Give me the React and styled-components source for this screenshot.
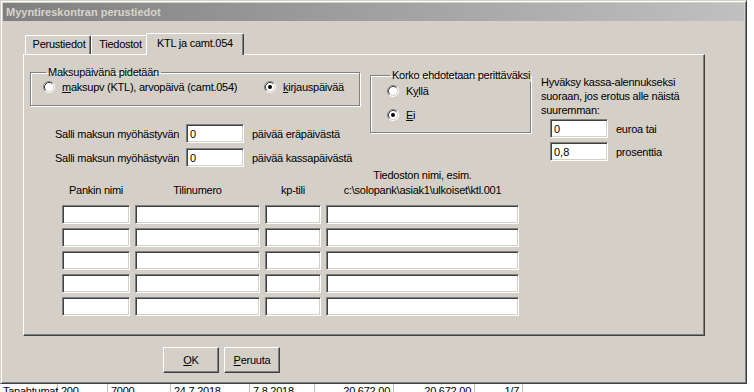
import React from 'react'
import styled, { createGlobalStyle } from 'styled-components'

const GlobalStyle = createGlobalStyle`
  body {
    margin: 0;
    background: #fff;
    font-family: "Liberation Sans", Arial, sans-serif;
    font-size: 11px;
    letter-spacing: -0.25px;
    color: #000;
  }
`

const bankRows = [0, 1, 2, 3, 4]

const Radio = ({ checked }) => (
  <svg width="12" height="12" viewBox="0 0 12 12">
    <circle cx="6" cy="6" r="5" fill="#fff" />
    <path d="M2.11 9.89 A5.5 5.5 0 0 1 9.89 2.11" stroke="#808080" fill="none" />
    <path d="M9.89 2.11 A5.5 5.5 0 0 1 2.11 9.89" stroke="#fff" fill="none" />
    <path d="M2.82 9.18 A4.5 4.5 0 0 1 9.18 2.82" stroke="#404040" fill="none" />
    <path d="M9.18 2.82 A4.5 4.5 0 0 1 2.82 9.18" stroke="#d4d0c8" fill="none" />
    {checked && <circle cx="6" cy="6" r="2" fill="#000" />}
  </svg>
)

const App = () => {
  return (
    <>
      <GlobalStyle />
      <Window>
        <TitleBar>Myyntireskontran perustiedot</TitleBar>
        <Body>
          <TabRow>
            <Tab w={66}>Perustiedot</Tab>
            <Tab w={57}>Tiedostot</Tab>
            <Tab w={98} active>KTL ja camt.054</Tab>
          </TabRow>
          <Panel>
            <TopSection>
              <LeftCol>
                <GroupBox>
                  <Legend>Maksupäivänä pidetään</Legend>
                  <RadioRow>
                    <Option w={221}><Radio /><span><u>m</u>aksupv (KTL), arvopäivä (camt.054)</span></Option>
                    <Option><Radio checked /><span><u>k</u>irjauspäivää</span></Option>
                  </RadioRow>
                </GroupBox>
                <DelayRows>
                  <FieldRow>
                    <Label w={131}>Salli maksun myöhästyvän</Label>
                    <Input w={58} defaultValue="0" />
                    <After>päivää eräpäivästä</After>
                  </FieldRow>
                  <FieldRow>
                    <Label w={131}>Salli maksun myöhästyvän</Label>
                    <Input w={58} defaultValue="0" />
                    <After>päivää kassapäivästä</After>
                  </FieldRow>
                </DelayRows>
              </LeftCol>
              <GroupBox2>
                <Legend>Korko ehdotetaan perittäväksi</Legend>
                <RadioCol>
                  <Option><Radio /><span>K<u>y</u>llä</span></Option>
                  <Option><Radio checked /><span><u>E</u>i</span></Option>
                </RadioCol>
              </GroupBox2>
              <RightCol>
                <Note>Hyväksy kassa-alennukseksi<br />suoraan, jos erotus alle näistä<br />suuremman:</Note>
                <SmallRows>
                  <FieldRow>
                    <Input w={58} defaultValue="0" />
                    <After>euroa tai</After>
                  </FieldRow>
                  <FieldRow>
                    <Input w={58} defaultValue="0,8" />
                    <After>prosenttia</After>
                  </FieldRow>
                </SmallRows>
              </RightCol>
            </TopSection>
            <BankGrid>
              <Head>Pankin nimi</Head>
              <Head>Tilinumero</Head>
              <Head>kp-tili</Head>
              <Head>Tiedoston nimi, esim.<br />c:\solopank\asiak1\ulkoiset\ktl.001</Head>
              {bankRows.map(r => (
                <React.Fragment key={r}>
                  <Input />
                  <Input />
                  <Input />
                  <Input />
                </React.Fragment>
              ))}
            </BankGrid>
          </Panel>
          <ButtonRow>
            <Button><u>O</u>K</Button>
            <Button><u>P</u>eruuta</Button>
          </ButtonRow>
        </Body>
      </Window>
      <Strip>
        <Cell w={58}>Tapahtumat</Cell>
        <Cell w={50}>200</Cell>
        <Cell w={63}>7000</Cell>
        <Cell w={79}>24.7.2018</Cell>
        <Cell w={65}>7.8.2018</Cell>
        <Cell w={79} right>20 672,00</Cell>
        <Cell w={81} right>20 672,00</Cell>
        <Cell w={48} right>1/7</Cell>
      </Strip>
    </>
  )
}

const Window = styled.div`
  width: 747px;
  height: 384px;
  box-sizing: border-box;
  background: #d4d0c8;
  border: 1px solid;
  border-color: #d4d0c8 #404040 #404040 #d4d0c8;
  box-shadow: inset 1px 1px #fff, inset -1px -1px #808080;
  padding: 2px;
  display: flex;
  flex-direction: column;
`

const TitleBar = styled.div`
  height: 18px;
  line-height: 18px;
  padding-left: 3px;
  background: linear-gradient(to right, #808080, #c0c0c0);
  color: #d8d4cc;
  font-weight: bold;
  font-size: 11px;
  letter-spacing: 0;
`

const Body = styled.div`
  padding: 12px 0 0 20px;
`

const TabRow = styled.div`
  display: flex;
  align-items: flex-end;
  height: 21px;
  padding-left: 2px;
  position: relative;
  z-index: 1;
`

const Tab = styled.div`
  box-sizing: border-box;
  width: ${p => p.w}px;
  height: ${p => (p.active ? 22 : 19)}px;
  margin: ${p => (p.active ? '0 0 -1px -2px' : '0')};
  border-top: 1px solid #fff;
  border-left: 1px solid #fff;
  border-right: 1px solid #404040;
  box-shadow: inset -1px 0 #808080;
  border-radius: 2px 2px 0 0;
  background: #d4d0c8;
  text-align: center;
  line-height: ${p => (p.active ? 18 : 17)}px;
  padding-left: ${p => (p.active ? 0 : 2)}px;
`

const Panel = styled.div`
  width: 682px;
  height: 282px;
  box-sizing: border-box;
  border: 1px solid;
  border-color: #fff #404040 #404040 #fff;
  box-shadow: inset -1px -1px #808080;
  padding: 11px 0 0 6px;
`

const TopSection = styled.div`
  display: flex;
  align-items: flex-start;
`

const LeftCol = styled.div`
  width: 330px;
  display: flex;
  flex-direction: column;
`

const GroupBox = styled.fieldset`
  margin: 0;
  padding: 1px 0 11px 12px;
  min-width: 0;
  border: 1px solid #808080;
  box-shadow: inset 1px 1px #fff, 1px 1px #fff;
`

const GroupBox2 = styled(GroupBox)`
  width: 161px;
  box-sizing: border-box;
  margin: 3px 0 0 10px;
  padding: 2px 0 10px 16px;
`

const Legend = styled.legend`
  padding: 0 2px;
  margin-left: 3px;
  line-height: 13px;
  white-space: nowrap;
`

const RadioRow = styled.div`
  display: flex;
  align-items: center;
`

const RadioCol = styled.div`
  display: flex;
  flex-direction: column;
  gap: 10px;
`

const Option = styled.label`
  display: flex;
  align-items: center;
  gap: 7px;
  width: ${p => (p.w ? `${p.w}px` : 'auto')};
  height: 14px;
  svg { flex: none; }
`

const DelayRows = styled.div`
  display: flex;
  flex-direction: column;
  gap: 5px;
  margin: 18px 0 0 25px;
`

const FieldRow = styled.div`
  display: flex;
  align-items: center;
`

const Label = styled.span`
  width: ${p => p.w}px;
  flex: none;
`

const After = styled.span`
  margin-left: 8px;
  white-space: nowrap;
`

const Input = styled.input`
  box-sizing: border-box;
  width: ${p => (p.w ? `${p.w}px` : 'auto')};
  min-width: 0;
  height: 19px;
  margin: 0;
  padding: 0 3px;
  font-family: inherit;
  font-size: 11px;
  color: #000;
  background: #fff;
  border: 1px solid;
  border-color: #808080 #fff #fff #808080;
  box-shadow: inset 1px 1px #404040, inset -1px -1px #d4d0c8;
  outline: none;
`

const RightCol = styled.div`
  margin: 9px 0 0 10px;
  display: flex;
  flex-direction: column;
`

const Note = styled.div`
  line-height: 14px;
`

const SmallRows = styled.div`
  display: flex;
  flex-direction: column;
  gap: 4px;
  margin: 2px 0 0 9px;
`

const BankGrid = styled.div`
  display: grid;
  grid-template-columns: 68px 125px 56px 193px;
  column-gap: 5px;
  row-gap: 4px;
  margin: 1px 0 0 32px;
`

const Head = styled.div`
  align-self: end;
  text-align: center;
  line-height: 15px;
  margin-bottom: 3px;
  white-space: nowrap;
`

const ButtonRow = styled.div`
  display: flex;
  gap: 5px;
  margin: 11px 0 0 140px;
`

const Button = styled.button`
  box-sizing: border-box;
  width: 56px;
  height: 26px;
  padding: 0;
  font-family: inherit;
  font-size: 11px;
  letter-spacing: inherit;
  color: #000;
  background: #d4d0c8;
  border: 1px solid;
  border-color: #fff #404040 #404040 #fff;
  box-shadow: inset -1px -1px #808080;
`

const Strip = styled.div`
  display: flex;
  height: 8px;
  width: 523px;
  overflow: hidden;
  background: #fff;
`

const Cell = styled.div`
  width: ${p => p.w}px;
  flex: none;
  box-sizing: border-box;
  border-right: 1px solid #c0c0c0;
  padding: 1px 3px 0;
  line-height: 13px;
  text-align: ${p => (p.right ? 'right' : 'left')};
  white-space: nowrap;
`

export default App
